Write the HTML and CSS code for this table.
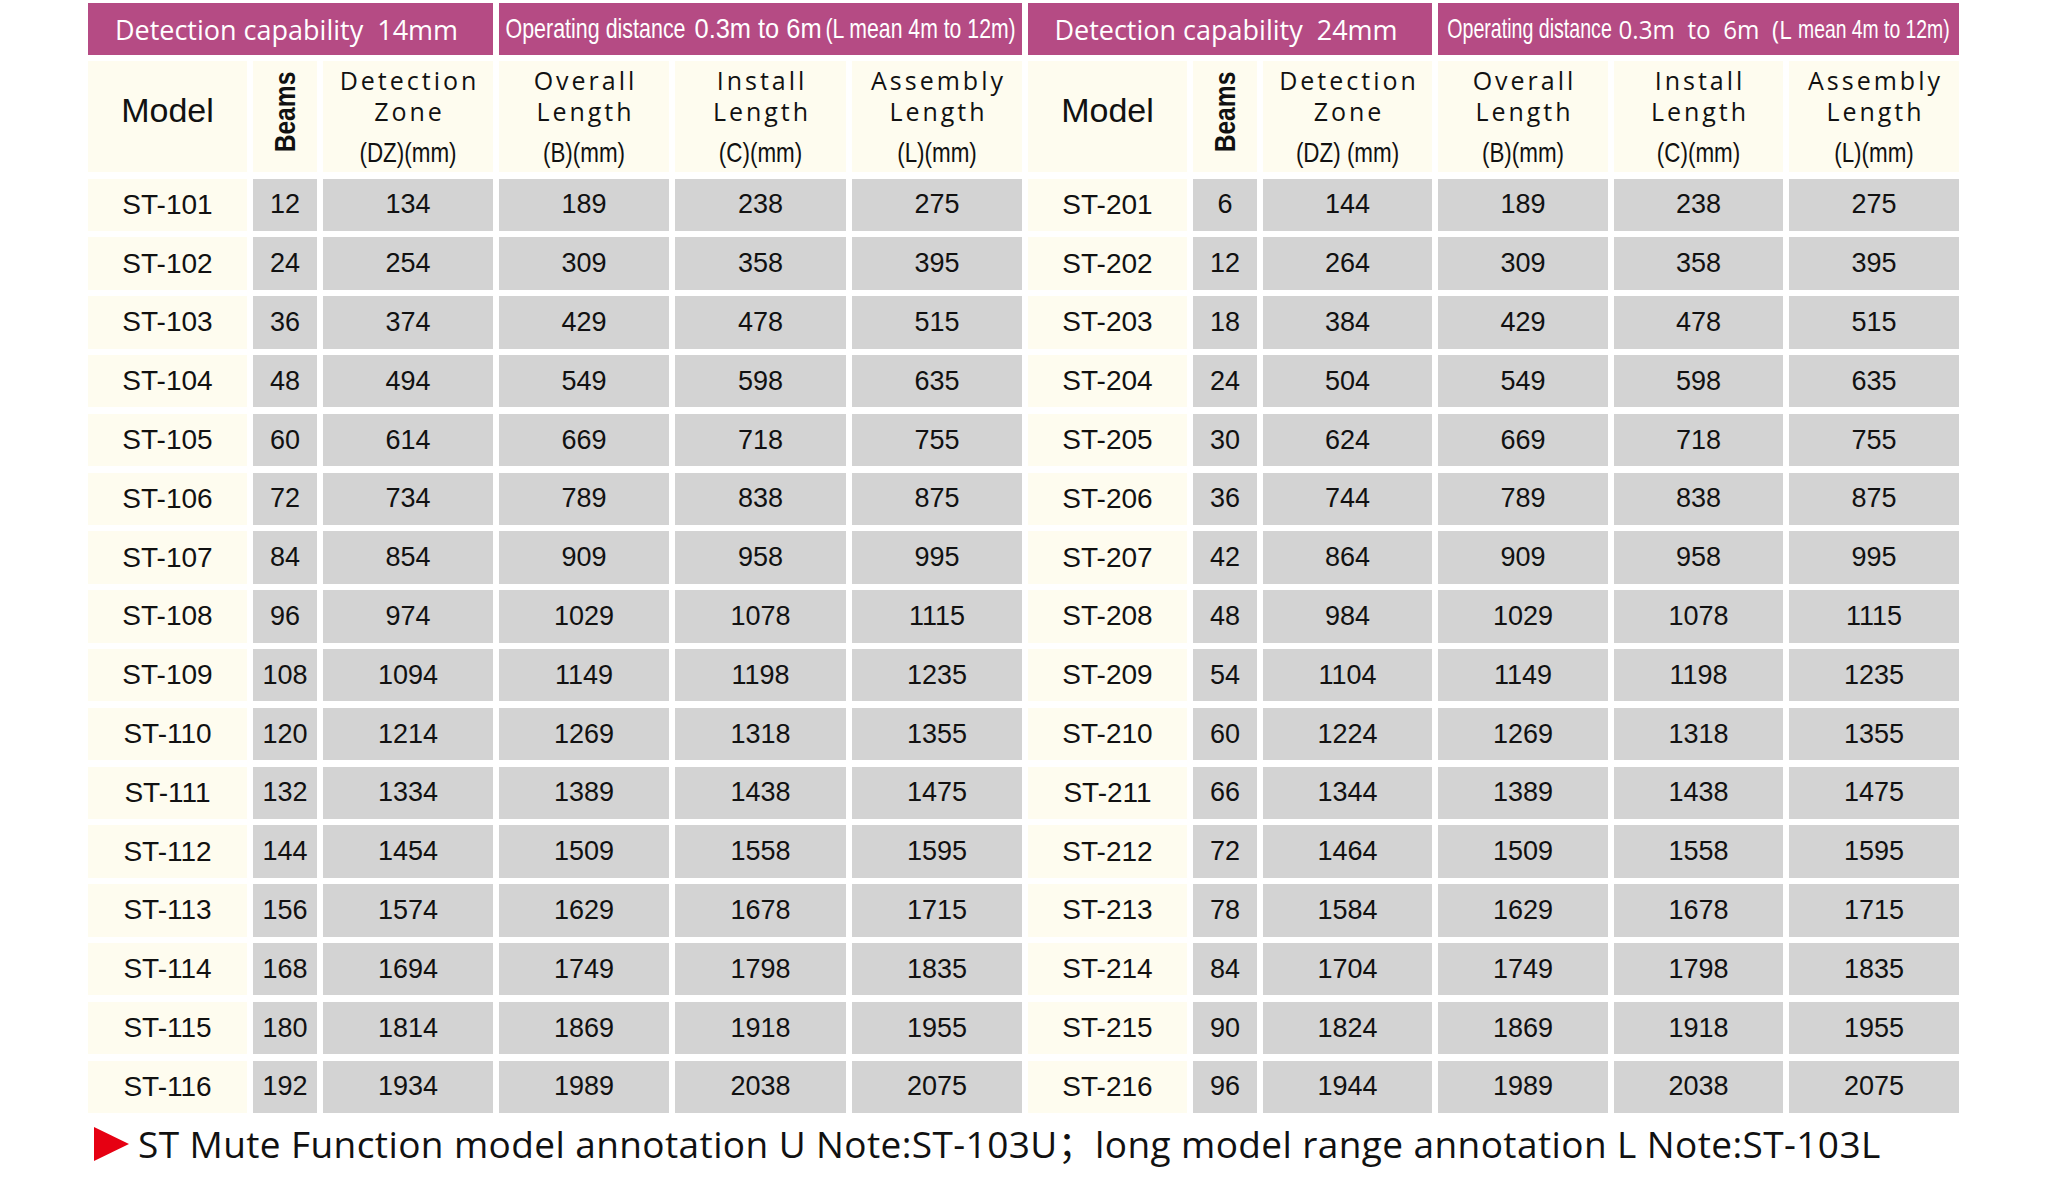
FILE: index.html
```html
<!DOCTYPE html>
<html lang="en">
<head>
<meta charset="utf-8">
<title>ST Safety Light Curtain Specifications</title>
<link rel="stylesheet" href="styles.css">
</head>
<body>
<main class="sheet">
  <div class="spec">
    <div class="band band-a"><span>Detection capability  14mm</span></div>
    <div class="band band-b"><span class="sq p1">Operating distance</span><span class="sq p2">0.3m to 6m</span><span class="sq p3">(L mean 4m to 12m)</span></div>
    <div class="band band-a"><span>Detection capability  24mm</span></div>
    <div class="band band-b"><span class="sq r1">Operating distance</span><span class="r2">0.3m  to  6m  (L</span><span class="sq r3">mean 4m to 12m)</span></div>

    <div class="h model">Model</div>
    <div class="h beams"><span>Beams</span></div>
    <div class="h stack"><span class="l1">Detection</span><span class="l2">Zone</span><span class="l3">(DZ)(mm)</span></div>
    <div class="h stack"><span class="l1">Overall</span><span class="l2">Length</span><span class="l3">(B)(mm)</span></div>
    <div class="h stack"><span class="l1">Install</span><span class="l2">Length</span><span class="l3">(C)(mm)</span></div>
    <div class="h stack"><span class="l1">Assembly</span><span class="l2">Length</span><span class="l3">(L)(mm)</span></div>
    <div class="h model">Model</div>
    <div class="h beams"><span>Beams</span></div>
    <div class="h stack"><span class="l1">Detection</span><span class="l2">Zone</span><span class="l3">(DZ) (mm)</span></div>
    <div class="h stack"><span class="l1">Overall</span><span class="l2">Length</span><span class="l3">(B)(mm)</span></div>
    <div class="h stack"><span class="l1">Install</span><span class="l2">Length</span><span class="l3">(C)(mm)</span></div>
    <div class="h stack"><span class="l1">Assembly</span><span class="l2">Length</span><span class="l3">(L)(mm)</span></div>

    <div class="c m">ST-101</div><div class="c">12</div><div class="c">134</div><div class="c">189</div><div class="c">238</div><div class="c">275</div><div class="c m">ST-201</div><div class="c">6</div><div class="c">144</div><div class="c">189</div><div class="c">238</div><div class="c">275</div>
    <div class="c m">ST-102</div><div class="c">24</div><div class="c">254</div><div class="c">309</div><div class="c">358</div><div class="c">395</div><div class="c m">ST-202</div><div class="c">12</div><div class="c">264</div><div class="c">309</div><div class="c">358</div><div class="c">395</div>
    <div class="c m">ST-103</div><div class="c">36</div><div class="c">374</div><div class="c">429</div><div class="c">478</div><div class="c">515</div><div class="c m">ST-203</div><div class="c">18</div><div class="c">384</div><div class="c">429</div><div class="c">478</div><div class="c">515</div>
    <div class="c m">ST-104</div><div class="c">48</div><div class="c">494</div><div class="c">549</div><div class="c">598</div><div class="c">635</div><div class="c m">ST-204</div><div class="c">24</div><div class="c">504</div><div class="c">549</div><div class="c">598</div><div class="c">635</div>
    <div class="c m">ST-105</div><div class="c">60</div><div class="c">614</div><div class="c">669</div><div class="c">718</div><div class="c">755</div><div class="c m">ST-205</div><div class="c">30</div><div class="c">624</div><div class="c">669</div><div class="c">718</div><div class="c">755</div>
    <div class="c m">ST-106</div><div class="c">72</div><div class="c">734</div><div class="c">789</div><div class="c">838</div><div class="c">875</div><div class="c m">ST-206</div><div class="c">36</div><div class="c">744</div><div class="c">789</div><div class="c">838</div><div class="c">875</div>
    <div class="c m">ST-107</div><div class="c">84</div><div class="c">854</div><div class="c">909</div><div class="c">958</div><div class="c">995</div><div class="c m">ST-207</div><div class="c">42</div><div class="c">864</div><div class="c">909</div><div class="c">958</div><div class="c">995</div>
    <div class="c m">ST-108</div><div class="c">96</div><div class="c">974</div><div class="c">1029</div><div class="c">1078</div><div class="c">1115</div><div class="c m">ST-208</div><div class="c">48</div><div class="c">984</div><div class="c">1029</div><div class="c">1078</div><div class="c">1115</div>
    <div class="c m">ST-109</div><div class="c">108</div><div class="c">1094</div><div class="c">1149</div><div class="c">1198</div><div class="c">1235</div><div class="c m">ST-209</div><div class="c">54</div><div class="c">1104</div><div class="c">1149</div><div class="c">1198</div><div class="c">1235</div>
    <div class="c m">ST-110</div><div class="c">120</div><div class="c">1214</div><div class="c">1269</div><div class="c">1318</div><div class="c">1355</div><div class="c m">ST-210</div><div class="c">60</div><div class="c">1224</div><div class="c">1269</div><div class="c">1318</div><div class="c">1355</div>
    <div class="c m">ST-111</div><div class="c">132</div><div class="c">1334</div><div class="c">1389</div><div class="c">1438</div><div class="c">1475</div><div class="c m">ST-211</div><div class="c">66</div><div class="c">1344</div><div class="c">1389</div><div class="c">1438</div><div class="c">1475</div>
    <div class="c m">ST-112</div><div class="c">144</div><div class="c">1454</div><div class="c">1509</div><div class="c">1558</div><div class="c">1595</div><div class="c m">ST-212</div><div class="c">72</div><div class="c">1464</div><div class="c">1509</div><div class="c">1558</div><div class="c">1595</div>
    <div class="c m">ST-113</div><div class="c">156</div><div class="c">1574</div><div class="c">1629</div><div class="c">1678</div><div class="c">1715</div><div class="c m">ST-213</div><div class="c">78</div><div class="c">1584</div><div class="c">1629</div><div class="c">1678</div><div class="c">1715</div>
    <div class="c m">ST-114</div><div class="c">168</div><div class="c">1694</div><div class="c">1749</div><div class="c">1798</div><div class="c">1835</div><div class="c m">ST-214</div><div class="c">84</div><div class="c">1704</div><div class="c">1749</div><div class="c">1798</div><div class="c">1835</div>
    <div class="c m">ST-115</div><div class="c">180</div><div class="c">1814</div><div class="c">1869</div><div class="c">1918</div><div class="c">1955</div><div class="c m">ST-215</div><div class="c">90</div><div class="c">1824</div><div class="c">1869</div><div class="c">1918</div><div class="c">1955</div>
    <div class="c m">ST-116</div><div class="c">192</div><div class="c">1934</div><div class="c">1989</div><div class="c">2038</div><div class="c">2075</div><div class="c m">ST-216</div><div class="c">96</div><div class="c">1944</div><div class="c">1989</div><div class="c">2038</div><div class="c">2075</div>
  </div>

  <p class="note"><svg class="tri" viewBox="0 0 35 34" aria-hidden="true"><polygon points="0,0 35,17 0,34" fill="#e60012"/></svg><span>ST Mute Function model annotation U Note:ST-103U；long model range annotation L Note:ST-103L</span></p>
</main>
</body>
</html>
```

FILE: styles.css
```css
html, body {
  margin: 0;
  padding: 0;
  background: #ffffff;
}

.sheet {
  width: 2048px;
  height: 1191px;
  padding-top: 3px;
  box-sizing: border-box;
  font-family: "Liberation Sans", Arial, sans-serif;
  color: #111111;
}

.spec {
  margin-left: 88px;
  display: grid;
  grid-template-columns: 159px 64px 170px 170px 171px 170px 159px 64px 169px 170px 169px 170px;
  grid-template-rows: 52px 111px repeat(16, 52.5px);
  column-gap: 6px;
  row-gap: 6.3px;
  width: max-content;
}

/* magenta title bands */
.band {
  grid-column: span 3;
  background: #b54b84;
  color: #ffffff;
  display: flex;
  align-items: center;
  justify-content: center;
  white-space: pre;
}

.band-a {
  font-family: "Open Sans", "Noto Sans", sans-serif;
  font-size: 27px;
  padding-right: 8px;
}

.band .sq {
  display: inline-block;
  flex: none;
  font-family: "Liberation Sans", Arial, sans-serif;
  font-size: 28px;
  line-height: 34px;
}

.band .p1 { transform: scaleX(0.766); margin: 0 -27.5px; }
.band .p2 { transform: scaleX(0.907); margin: 0 -6.5px 0 2.5px; }
.band .p3 { transform: scaleX(0.758); margin: 0 -30.5px 0 -26.5px; }

.band .r1 { transform: scaleX(0.70); margin: 0 -35.25px; }
.band .r2 {
  display: inline-block;
  flex: none;
  margin: 0 -6.4px 0 0;
  transform: scaleX(0.93);
  font-family: "Open Sans", "Noto Sans", sans-serif;
  font-size: 26px;
  line-height: 34px;
}
.band .r3 { font-size: 26px; transform: scaleX(0.744); margin: 0 -26.1px 0 -19px; }

/* column headers */
.h {
  background: #fefcef;
  color: #111111;
  text-align: center;
  box-sizing: border-box;
}

.h.model {
  display: flex;
  align-items: center;
  justify-content: center;
  padding-bottom: 12px;
  font-size: 34px;
}

.h.beams {
  display: flex;
  align-items: center;
  justify-content: center;
  padding-bottom: 10px;
}

.h.beams span {
  display: inline-block;
  flex: none;
  transform: rotate(-90deg) scaleX(0.82);
  font-weight: 700;
  font-size: 30px;
  line-height: 1;
}

.h.stack {
  padding-top: 4px;
}

.h.stack span {
  display: block;
}

.h.stack .l1,
.h.stack .l2 {
  font-family: "Open Sans", "Noto Sans", sans-serif;
  font-size: 25px;
  line-height: 31px;
  letter-spacing: 3px;
  padding-left: 3px;
}

.h.stack .l3 {
  margin-top: 10px;
  font-size: 28px;
  line-height: 32px;
  transform: scaleX(0.8);
}

/* data cells */
.c {
  background: #d3d3d3;
  display: flex;
  align-items: center;
  justify-content: center;
  font-size: 27px;
  color: #111111;
}

.c.m {
  background: #fefcef;
  font-size: 28px;
}

/* footnote */
.note {
  margin: 11px 0 0 94px;
  display: flex;
  align-items: center;
  gap: 9px;
  font-family: "Open Sans", "Noto Sans", "Noto Sans CJK SC", sans-serif;
  font-size: 37px;
  line-height: 40px;
  letter-spacing: 0.4px;
  color: #111111;
  white-space: nowrap;
}

.note .tri {
  width: 35px;
  height: 34px;
  flex: none;
}
```
